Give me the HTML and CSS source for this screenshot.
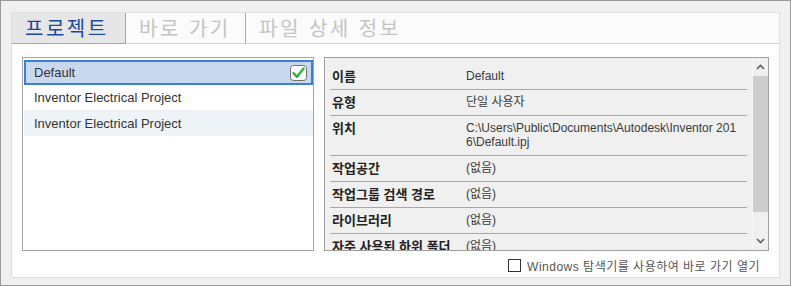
FILE: index.html
```html
<!DOCTYPE html>
<html lang="ko">
<head>
<meta charset="utf-8">
<link rel="stylesheet" href="styles.css">
</head>
<body>
<div class="window">
  <div class="panel">
    <div class="tabs">
      <div class="tab tab-1 active">프로젝트</div>
      <div class="tab tab-2">바로 가기</div>
      <div class="tab tab-3">파일 상세 정보</div>
      <div class="tab-rest"></div>
    </div>
    <div class="content">
      <div class="main">
        <div class="list">
          <div class="item selected">
            <span>Default</span>
            <span class="check">
              <svg width="17" height="16" viewBox="0 0 17 16">
                <rect x="0.5" y="0.5" width="16" height="15" rx="3" ry="3" fill="#fff" stroke="#6f6f6f"/>
                <path d="M3.5 8.2 L7 11.8 L13.6 3.6" fill="none" stroke="#2fb43a" stroke-width="2.4" stroke-linecap="round" stroke-linejoin="round"/>
              </svg>
            </span>
          </div>
          <div class="item">Inventor Electrical Project</div>
          <div class="item alt">Inventor Electrical Project</div>
        </div>
        <div class="grid">
          <div class="rows">
            <div class="row"><div class="label">이름</div><div class="value">Default</div></div>
            <div class="row"><div class="label">유형</div><div class="value">단일 사용자</div></div>
            <div class="row"><div class="label">위치</div><div class="value">C:\Users\Public\Documents\Autodesk\Inventor 2016\Default.ipj</div></div>
            <div class="row"><div class="label">작업공간</div><div class="value">(없음)</div></div>
            <div class="row"><div class="label">작업그룹 검색 경로</div><div class="value">(없음)</div></div>
            <div class="row"><div class="label">라이브러리</div><div class="value">(없음)</div></div>
            <div class="row"><div class="label">자주 사용된 하위 폴더</div><div class="value">(없음)</div></div>
          </div>
          <div class="scrollbar">
            <div class="sb-btn">
              <svg width="9" height="6" viewBox="0 0 9 6"><path d="M1 5 L4.5 1.5 L8 5" fill="none" stroke="#606060" stroke-width="1.6"/></svg>
            </div>
            <div class="sb-thumb"></div>
            <div class="sb-track"></div>
            <div class="sb-btn">
              <svg width="9" height="6" viewBox="0 0 9 6"><path d="M1 1 L4.5 4.5 L8 1" fill="none" stroke="#606060" stroke-width="1.6"/></svg>
            </div>
          </div>
        </div>
      </div>
      <div class="footer">
        <span class="cb"></span>
        <span class="opt-text">Windows 탐색기를 사용하여 바로 가기 열기</span>
      </div>
    </div>
  </div>
</div>
</body>
</html>
```

FILE: styles.css
```css
* { box-sizing: border-box; }
html, body { margin: 0; padding: 0; }
body {
  font-family: "Liberation Sans", "Noto Sans CJK KR", sans-serif;
  background: #f0f0f0;
}
.window {
  width: 791px;
  height: 286px;
  border: 1px solid #9a9a9a;
  background: #f0f0f0;
  padding: 11px 10px 7px 10px;
}
.panel {
  width: 769px;
  height: 266px;
  border: 1px solid #dedede;
  background: #fff;
  display: flex;
  flex-direction: column;
}
.tabs {
  display: flex;
  height: 31px;
}
.tab {
  height: 31px;
  padding-left: 13px;
  font-family: "Noto Sans CJK KR", sans-serif;
  font-size: 20px;
  letter-spacing: 2.5px;
  line-height: 29px;
  color: #c4c4c4;
  border-right: 1px solid #a8a8a8;
  border-bottom: 1px solid #d4d4d4;
  background: #fbfbfb;
  white-space: nowrap;
}
.tab-1 { width: 114px; }
.tab-2 { width: 120px; }
.tab-3 { width: 170px; border-right: none; }
.tab.active {
  background: #e6e6e6;
  color: #1a4aa3;
  border-bottom: 1px solid #a8a8a8;
}
.tab-rest {
  flex: 1;
  border-bottom: 1px solid #d4d4d4;
  background: #fbfbfb;
}
.content {
  flex: 1;
  padding: 13px 10px 0 10px;
  display: flex;
  flex-direction: column;
}
.main {
  display: flex;
  gap: 10px;
  height: 194px;
}
.list {
  width: 292px;
  height: 194px;
  border: 1px solid #a4a4a4;
  padding: 2px 0 0 1px;
  background: #fff;
}
.item {
  height: 25px;
  padding-left: 10px;
  font-size: 13px;
  line-height: 25px;
  color: #333;
  display: flex;
  align-items: center;
  justify-content: space-between;
}
.item.alt { background: #eef3f8; height: 26px; }
.item.selected {
  border: 2px solid #3c7fd6;
  background: #c8d9ef;
  padding-left: 8px;
  padding-right: 4px;
}
.check { display: flex; }
.grid {
  width: 445px;
  height: 194px;
  border: 1px solid #a0a0a0;
  background: #f0f0f0;
  display: flex;
  overflow: hidden;
}
.rows {
  flex: 1;
  padding: 6px 5px 0 5px;
  overflow: hidden;
}
.row {
  display: flex;
  border-bottom: 1px solid #a6a6a6;
  padding: 5px 0 6px 2px;
  font-size: 12px;
  line-height: 14px;
}
.label {
  width: 134px;
  font-family: "Noto Sans CJK KR", sans-serif;
  font-size: 13px;
  font-weight: bold;
  color: #222;
  white-space: nowrap;
  flex: none;
}
.value {
  flex: none;
  width: 273px;
  color: #3a3a3a;
  word-break: break-all;
}
.scrollbar {
  width: 16px;
  display: flex;
  flex-direction: column;
  background: #f0f0f0;
  border-left: 1px solid #f7f7f7;
}
.sb-btn {
  height: 18px;
  display: flex;
  align-items: center;
  justify-content: center;
}
.sb-thumb {
  height: 136px;
  background: #cdcdcd;
}
.sb-track { flex: 1; }
.footer {
  display: flex;
  justify-content: flex-end;
  align-items: center;
  margin-top: 7px;
  padding-right: 9px;
  height: 14px;
}
.cb {
  width: 13px;
  height: 13px;
  border: 1px solid #333;
  background: #fff;
  margin-right: 6px;
}
.opt-text {
  font-size: 12px;
  letter-spacing: 0.5px;
  color: #555;
  white-space: nowrap;
}
```
